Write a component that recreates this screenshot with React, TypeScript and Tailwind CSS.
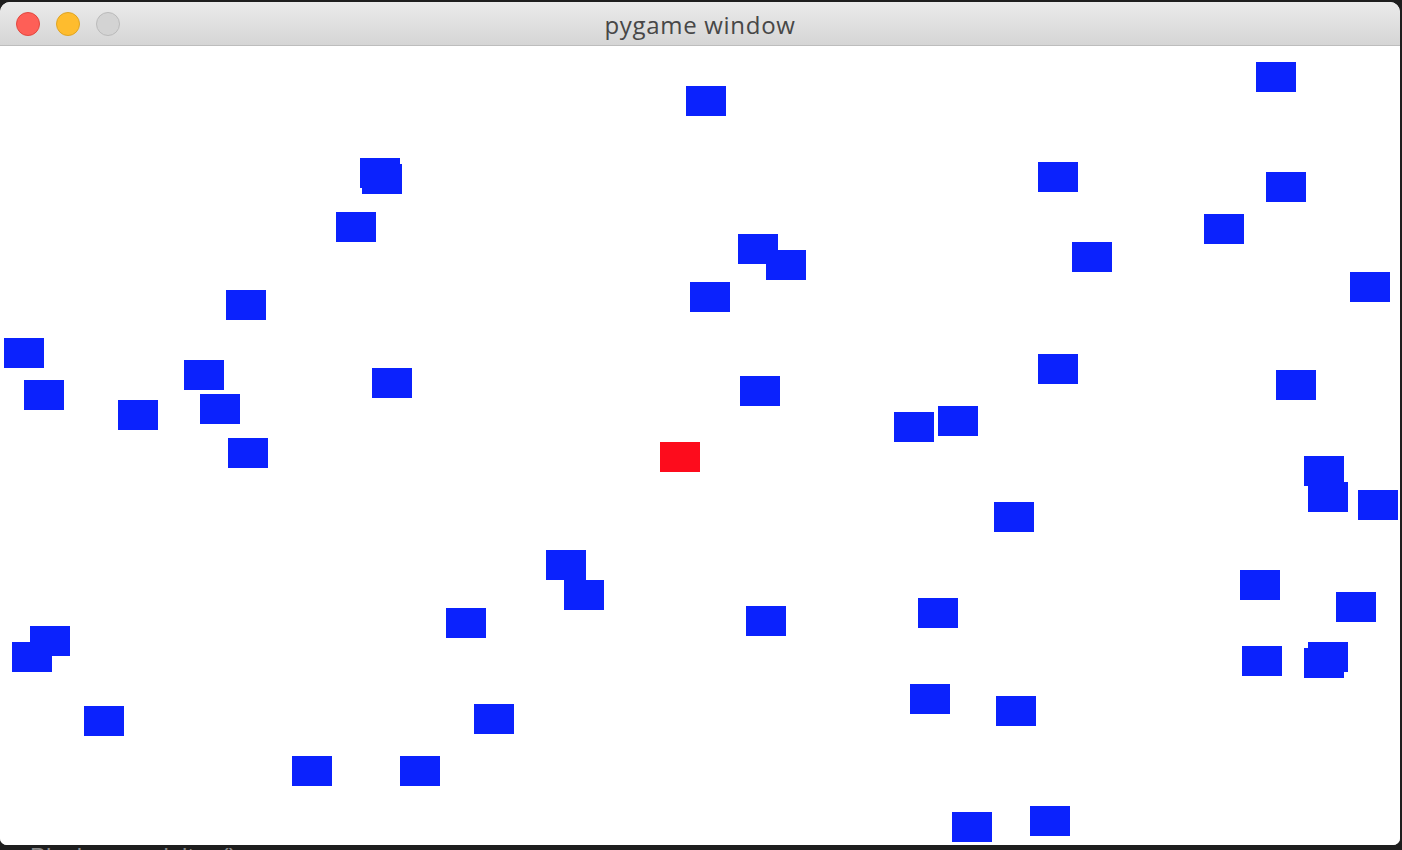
import React from "react";

// sprite positions, screen coords (top-left), each block is 40x30
const blocks: [number, number][] = [
  [686, 86], [1256, 62], [360, 158], [362, 164], [1038, 162], [1266, 172],
  [336, 212], [1204, 214], [738, 234], [766, 250], [1072, 242], [1350, 272],
  [690, 282], [226, 290], [4, 338], [24, 380], [184, 360], [200, 394],
  [118, 400], [372, 368], [228, 438], [1038, 354], [740, 376], [1276, 370],
  [894, 412], [938, 406], [1304, 456], [1308, 482], [1358, 490], [994, 502],
  [546, 550], [564, 580], [446, 608], [746, 606], [918, 598], [1240, 570],
  [1336, 592], [30, 626], [12, 642], [1242, 646], [1308, 642], [1304, 648],
  [84, 706], [474, 704], [910, 684], [996, 696], [292, 756], [400, 756],
  [952, 812], [1030, 806],
];

const player: [number, number] = [660, 442];

const TOP = 46;

export default function App() {
  return (
    <div className="w-[1402px] h-[850px] bg-[#1e1e1e] pt-[2px] overflow-hidden flex flex-col">
      <div className="w-[1400px] rounded-t-[10px] rounded-b-[7px] overflow-hidden bg-white flex flex-col">
        {/* title bar */}
        <div className="h-[44px] bg-gradient-to-b from-[#ebebeb] to-[#d5d5d5] border-b border-[#bdbdbd] flex items-center relative">
          <div className="flex items-center gap-[16px] pl-[16px]">
            <span className="w-[24px] h-[24px] rounded-full bg-[#fe5f57] border border-[#e1483f]" />
            <span className="w-[24px] h-[24px] rounded-full bg-[#febc2e] border border-[#dea424]" />
            <span className="w-[24px] h-[24px] rounded-full bg-[#d3d3d3] border border-[#bababa]" />
          </div>
          <div
            className="absolute inset-0 flex items-center justify-center text-[24px] tracking-[0.7px] text-[#474747] pt-[2px]"
            style={{ fontFamily: '"Open Sans", "Liberation Sans", sans-serif' }}
          >
            pygame window
          </div>
        </div>

        {/* game surface */}
        <div className="relative h-[799px] bg-white">
          {blocks.map(([x, y], i) => (
            <div
              key={i}
              className="absolute w-[40px] h-[30px] bg-[#0b22fd]"
              style={{ left: x, top: y - TOP }}
            />
          ))}
          <div
            className="absolute w-[40px] h-[30px] bg-[#fd0c1c]"
            style={{ left: player[0], top: player[1] - TOP }}
          />
        </div>
      </div>

      {/* editor text peeking underneath */}
      <div
        className="h-[5px] overflow-hidden flex gap-[48px] pl-[30px] text-[24px] leading-[24px] text-[#8a8a8a]"
        style={{ fontFamily: '"Liberation Sans", sans-serif' }}
      >
        <span className="mt-[0px]">Block</span>
        <span className="mt-[0px]">__init__()</span>
      </div>
    </div>
  );
}
